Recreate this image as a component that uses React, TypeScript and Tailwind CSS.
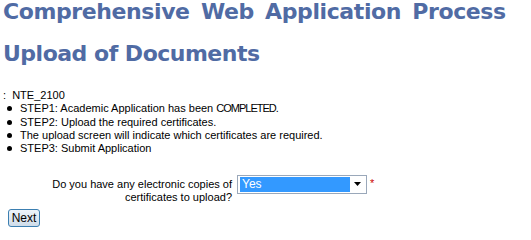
export default function App() {
  const steps: React.ReactNode[] = [
    <>
      STEP1: Academic Application has been <span className="tracking-[-1px]">COMPLETED.</span>
    </>,
    "STEP2: Upload the required certificates.",
    "The upload screen will indicate which certificates are required.",
    "STEP3: Submit Application",
  ];
  return (
    <div className="w-[531px] h-[230px] bg-white overflow-hidden pl-[3px] text-black" style={{ fontFamily: '"Liberation Sans", Arial, sans-serif' }}>
      <h1 className="h-[24px] leading-[24px] text-[22px] tracking-[-0.4px] [word-spacing:4px] font-bold text-[#506ba4] whitespace-nowrap" style={{ fontFamily: '"DejaVu Sans", Verdana, sans-serif' }}>
        Comprehensive Web Application Process
      </h1>
      <h1 className="mt-[18px] h-[24px] leading-[24px] text-[22px] tracking-[-0.5px] font-bold text-[#506ba4] whitespace-nowrap" style={{ fontFamily: '"DejaVu Sans", Verdana, sans-serif' }}>
        Upload of Documents
      </h1>
      <div className="mt-[23px] text-[11px] leading-[13.33px]">
        <div>:&nbsp; NTE_2100</div>
        <ul>
          {steps.map((s, i) => (
            <li key={i} className="flex items-center">
              <span className="ml-[4px] w-[5px] h-[5px] rounded-full bg-black mr-[8px] shrink-0" />
              <span>{s}</span>
            </li>
          ))}
        </ul>
      </div>
      <div className="mt-[19px] flex items-start">
        <div className="w-[229px] text-right text-[11px] leading-[13px] pt-[3px]">
          Do you have any electronic copies of
          <br />
          certificates to upload?
        </div>
        <div className="ml-[5px] w-[130px] h-[19px] border border-[#9aa8ba] bg-white flex items-center pl-[2px] pr-[1px]">
          <div className="w-[110px] h-[15px] bg-[#3399ff] text-white text-[12px] leading-[15px] pl-[2px]">Yes</div>
          <div className="flex-1 flex justify-center items-center">
            <svg width="7" height="4" viewBox="0 0 7 4"><path d="M0 0h7L3.5 4z" fill="#000" /></svg>
          </div>
        </div>
        <span className="ml-[3px] text-[#cc0000] text-[11px] leading-[11px] pt-[3px]">*</span>
      </div>
      <button className="block mt-[5px] ml-[5px] w-[32px] h-[18px] rounded-[3px] border border-[#3c7fb1] bg-gradient-to-b from-[#eef4fa] to-[#cfdce9] text-[12px] leading-[16px] text-black">
        Next
      </button>
    </div>
  );
}
